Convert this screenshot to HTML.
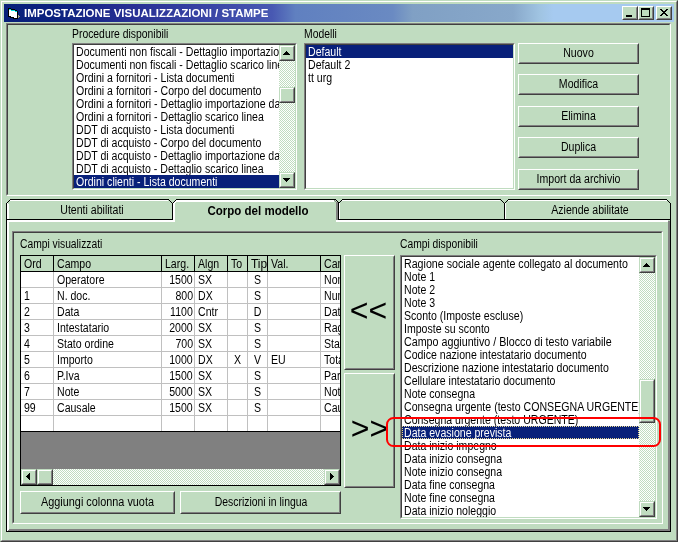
<!DOCTYPE html>
<html lang="it"><head><meta charset="utf-8"><title>IMPOSTAZIONE VISUALIZZAZIONI / STAMPE</title>
<style>
html,body{margin:0;padding:0}
body{width:678px;height:542px;overflow:hidden;position:relative;background:#c0dcc0;font:12px/13px "Liberation Sans",sans-serif;color:#000}
div,span,svg{position:absolute;box-sizing:border-box}
.t{white-space:pre;transform:scaleX(0.88);transform-origin:0 50%;left:0;top:0;line-height:13px;height:13px}
.tc{white-space:pre;transform:scaleX(0.88);transform-origin:50% 50%;left:0;right:0;text-align:center;line-height:13px;height:13px}
.tr{white-space:pre;transform:scaleX(0.88);transform-origin:100% 50%;right:0;top:0;line-height:13px;height:13px}
.sunk{border:1px solid;border-color:#808080 #fff #fff #808080}
.sunk>.i{left:0;top:0;right:0;bottom:0;border:1px solid;border-color:#404040 #c0dcc0 #c0dcc0 #404040}
.btn{border:1px solid;border-color:#fff #404040 #404040 #fff;background:#c0dcc0}
.btn>.i{left:0;top:0;right:0;bottom:0;border:1px solid;border-color:#c0dcc0 #808080 #808080 #c0dcc0}
.sb{border:1px solid;border-color:#c0dcc0 #404040 #404040 #c0dcc0;background:#c0dcc0}
.sb>.i{left:0;top:0;right:0;bottom:0;border:1px solid;border-color:#fff #808080 #808080 #fff}
.trk{background-color:#c0dcc0;background-image:repeating-conic-gradient(#fff 0% 25%,#c0dcc0 0% 50%);background-size:2px 2px}
.lb{background:#fff;overflow:hidden}
.row{left:0;height:13px;overflow:visible}
.sel{background:#08207a;color:#fff}
.gl{background:#c0c0c0}
.bl{background:#000}
</style></head>
<body>
<div id="win" style="left:0;top:0;width:678px;height:542px;will-change:transform">
<div class="" style="left:0px;top:0px;width:678px;height:542px;border:1px solid;border-color:#c0dcc0 #404040 #404040 #c0dcc0"></div>
<div class="" style="left:1px;top:1px;width:676px;height:540px;border:1px solid;border-color:#fff #808080 #808080 #fff"></div>
<div class="" style="left:4px;top:4px;width:670px;height:18px;background:linear-gradient(to right,#08207a 0%,#0c2280 8%,#283094 19%,#3c48a8 32%,#4858b2 40%,#6080c0 43.5%,#6a8ac2 58%,#80a0c4 61%,#88a8ca 76%,#a0c4e2 80%,#a6caf0 82%,#a6caf0 100%)"></div>
<svg style="left:0;top:0" width="24" height="24" viewBox="0 0 24 24" shape-rendering="crispEdges"><rect x="8" y="8" width="3" height="1" fill="#000"/><rect x="8" y="9" width="1" height="1" fill="#000"/><rect x="9" y="9" width="2" height="1" fill="#00e0e0"/><rect x="11" y="9" width="4" height="1" fill="#000"/><rect x="8" y="10" width="1" height="1" fill="#000"/><rect x="9" y="10" width="2" height="1" fill="#fff"/><rect x="11" y="10" width="4" height="1" fill="#00e0e0"/><rect x="15" y="10" width="2" height="1" fill="#000"/><rect x="8" y="11" width="1" height="1" fill="#000"/><rect x="9" y="11" width="6" height="1" fill="#fff"/><rect x="15" y="11" width="2" height="1" fill="#00e0e0"/><rect x="17" y="11" width="1" height="1" fill="#000"/><rect x="8" y="12" width="1" height="1" fill="#000"/><rect x="9" y="12" width="8" height="1" fill="#fff"/><rect x="17" y="12" width="1" height="1" fill="#000"/><rect x="8" y="13" width="1" height="1" fill="#000"/><rect x="9" y="13" width="8" height="1" fill="#fff"/><rect x="17" y="13" width="1" height="1" fill="#000"/><rect x="8" y="14" width="1" height="1" fill="#000"/><rect x="9" y="14" width="8" height="1" fill="#fff"/><rect x="17" y="14" width="1" height="1" fill="#000"/><rect x="8" y="15" width="1" height="1" fill="#000"/><rect x="9" y="15" width="8" height="1" fill="#fff"/><rect x="17" y="15" width="1" height="1" fill="#000"/><rect x="18" y="15" width="1" height="1" fill="#a0a088"/><rect x="8" y="16" width="3" height="1" fill="#000"/><rect x="11" y="16" width="6" height="1" fill="#fff"/><rect x="17" y="16" width="1" height="1" fill="#000"/><rect x="18" y="16" width="2" height="1" fill="#a0a088"/><rect x="10" y="17" width="4" height="1" fill="#000"/><rect x="14" y="17" width="3" height="1" fill="#fff"/><rect x="17" y="17" width="1" height="1" fill="#000"/><rect x="18" y="17" width="1" height="1" fill="#a0a088"/><rect x="13" y="18" width="5" height="1" fill="#000"/></svg>
<span style="left:24px;top:6px;font:bold 11px/14px 'Liberation Sans',sans-serif;color:#fff;white-space:pre;transform:scaleX(1.043);transform-origin:0 50%">IMPOSTAZIONE VISUALIZZAZIONI / STAMPE</span>
<div class="btn" style="left:622px;top:6px;width:16px;height:14px;"><div class="i"></div><div style="left:3px;top:8px;width:6px;height:2px;background:#000"></div></div>
<div class="btn" style="left:638px;top:6px;width:16px;height:14px;"><div class="i"></div><div style="left:2px;top:1px;width:9px;height:9px;border:1px solid #000;border-top-width:2px"></div></div>
<div class="btn" style="left:656px;top:6px;width:16px;height:14px;"><div class="i"></div><svg style="left:3px;top:2px" width="8" height="7" viewBox="0 0 8 7" shape-rendering="crispEdges"><path d="M0 0h2v1h1v1h2v-1h1v-1h2v1h-1v1h-1v1h-1v1h1v1h1v1h1v1h-2v-1h-1v-1h-2v1h-1v1h-2v-1h1v-1h1v-1h1v-1h-1v-1h-1v-1h-1z" fill="#000"/></svg></div>
<div class="sunk" style="left:6px;top:23px;width:665px;height:173px;"><div class="i"></div></div>
<span class="t" style="left:72px;top:28px;transform:scaleX(.865)">Procedure disponibili</span>
<span class="t" style="left:304px;top:28px;transform:scaleX(.865)">Modelli</span>
<div class="sunk" style="left:72px;top:43px;width:225px;height:147px"><div class="i"></div><div class="lb" style="left:1px;top:1px;width:205px;height:143px"><div class="row" style="top:0px;width:205px"><span class="t" style="left:2.3px;top:1px;">Documenti non fiscali - Dettaglio importazione dati</span></div><div class="row" style="top:13px;width:205px"><span class="t" style="left:2.3px;top:1px;">Documenti non fiscali - Dettaglio scarico linea</span></div><div class="row" style="top:26px;width:205px"><span class="t" style="left:2.3px;top:1px;">Ordini a fornitori - Lista documenti</span></div><div class="row" style="top:39px;width:205px"><span class="t" style="left:2.3px;top:1px;">Ordini a fornitori - Corpo del documento</span></div><div class="row" style="top:52px;width:205px"><span class="t" style="left:2.3px;top:1px;">Ordini a fornitori - Dettaglio importazione dati</span></div><div class="row" style="top:65px;width:205px"><span class="t" style="left:2.3px;top:1px;">Ordini a fornitori - Dettaglio scarico linea</span></div><div class="row" style="top:78px;width:205px"><span class="t" style="left:2.3px;top:1px;">DDT di acquisto - Lista documenti</span></div><div class="row" style="top:91px;width:205px"><span class="t" style="left:2.3px;top:1px;">DDT di acquisto - Corpo del documento</span></div><div class="row" style="top:104px;width:205px"><span class="t" style="left:2.3px;top:1px;">DDT di acquisto - Dettaglio importazione dati</span></div><div class="row" style="top:117px;width:205px"><span class="t" style="left:2.3px;top:1px;">DDT di acquisto - Dettaglio scarico linea</span></div><div class="row sel" style="top:130px;width:205px"><span class="t" style="left:2.3px;top:1px;">Ordini clienti - Lista documenti</span></div></div><div class="trk" style="left:206px;top:1px;width:16px;height:143px"><div class="sb" style="left:0px;top:0px;width:16px;height:16px;"><div class="i"></div><svg width="16" height="16" style="left:-1px;top:-1px" viewBox="0 0 16 16" shape-rendering="crispEdges" fill="#000"><rect x="7" y="6" width="1" height="1"/><rect x="6" y="7" width="3" height="1"/><rect x="5" y="8" width="5" height="1"/><rect x="4" y="9" width="7" height="1"/></svg></div><div class="sb" style="left:0px;top:127px;width:16px;height:16px;"><div class="i"></div><svg width="16" height="16" style="left:-1px;top:-1px" viewBox="0 0 16 16" shape-rendering="crispEdges" fill="#000"><rect x="4" y="6" width="7" height="1"/><rect x="5" y="7" width="5" height="1"/><rect x="6" y="8" width="3" height="1"/><rect x="7" y="9" width="1" height="1"/></svg></div><div class="sb" style="left:0px;top:42px;width:16px;height:16px;"><div class="i"></div></div></div></div>
<div class="sunk" style="left:304px;top:43px;width:211px;height:147px"><div class="i"></div><div class="lb" style="left:1px;top:1px;width:207px;height:143px"><div class="row sel" style="top:0px;width:207px"><span class="t" style="left:2.3px;top:1px;">Default</span></div><div class="row" style="top:13px;width:207px"><span class="t" style="left:2.3px;top:1px;">Default 2</span></div><div class="row" style="top:26px;width:207px"><span class="t" style="left:2.3px;top:1px;">tt urg</span></div></div></div>
<div class="btn" style="left:518px;top:43px;width:121px;height:21px;"><div class="i"></div><span class="tc" style="top:3px">Nuovo</span></div>
<div class="btn" style="left:518px;top:74px;width:121px;height:21px;"><div class="i"></div><span class="tc" style="top:3px">Modifica</span></div>
<div class="btn" style="left:518px;top:106px;width:121px;height:21px;"><div class="i"></div><span class="tc" style="top:3px">Elimina</span></div>
<div class="btn" style="left:518px;top:137px;width:121px;height:21px;"><div class="i"></div><span class="tc" style="top:3px">Duplica</span></div>
<div class="btn" style="left:518px;top:169px;width:121px;height:21px;"><div class="i"></div><span class="tc" style="top:3px">Import da archivio</span></div>
<svg style="left:0;top:0" width="678" height="542" viewBox="0 0 678 542" shape-rendering="crispEdges" fill="none"><rect x="6" y="204" width="1" height="328" fill="#000"/><rect x="7" y="204" width="2" height="325" fill="#fff"/><rect x="7" y="529" width="1" height="1" fill="#fff"/><rect x="8" y="529" width="1" height="1" fill="#fff"/><rect x="7" y="530" width="1" height="1" fill="#fff"/><rect x="6" y="531" width="665" height="1" fill="#000"/><rect x="9" y="529" width="661" height="2" fill="#808080"/><rect x="8" y="530" width="1" height="1" fill="#808080"/><rect x="670" y="204" width="1" height="328" fill="#000"/><rect x="668" y="221" width="2" height="310" fill="#808080"/><rect x="7" y="202" width="1" height="1" fill="#000"/><rect x="8" y="201" width="1" height="1" fill="#000"/><rect x="9" y="200" width="1" height="1" fill="#000"/><rect x="10" y="199" width="1" height="1" fill="#000"/><rect x="6" y="203" width="1" height="1" fill="#000"/><rect x="10" y="199" width="158" height="1" fill="#000"/><rect x="10" y="200" width="158" height="1" fill="#fff"/><rect x="7" y="203" width="1" height="16" fill="#fff"/><rect x="168" y="199" width="1" height="1" fill="#000"/><rect x="169" y="200" width="1" height="1" fill="#000"/><rect x="170" y="201" width="1" height="1" fill="#000"/><rect x="171" y="202" width="1" height="1" fill="#000"/><rect x="172" y="203" width="1" height="17" fill="#000"/><rect x="7" y="219" width="165" height="1" fill="#000"/><rect x="7" y="220" width="168" height="2" fill="#fff"/><rect x="173" y="202" width="1" height="1" fill="#000"/><rect x="174" y="201" width="1" height="1" fill="#000"/><rect x="175" y="200" width="1" height="1" fill="#000"/><rect x="176" y="199" width="1" height="1" fill="#000"/><rect x="176" y="199" width="159" height="1" fill="#000"/><rect x="176" y="200" width="158" height="2" fill="#fff"/><rect x="173" y="203" width="2" height="19" fill="#fff"/><rect x="174" y="202" width="1" height="1" fill="#fff"/><rect x="175" y="201" width="1" height="1" fill="#fff"/><rect x="175" y="202" width="1" height="1" fill="#fff"/><rect x="335" y="199" width="1" height="1" fill="#000"/><rect x="336" y="200" width="1" height="1" fill="#000"/><rect x="337" y="201" width="1" height="1" fill="#000"/><rect x="338" y="202" width="1" height="1" fill="#000"/><rect x="334" y="200" width="1" height="1" fill="#808080"/><rect x="335" y="201" width="1" height="1" fill="#808080"/><rect x="336" y="202" width="1" height="1" fill="#808080"/><rect x="336" y="202" width="2" height="19" fill="#808080"/><rect x="338" y="203" width="1" height="17" fill="#000"/><rect x="339" y="202" width="1" height="1" fill="#000"/><rect x="340" y="201" width="1" height="1" fill="#000"/><rect x="341" y="200" width="1" height="1" fill="#000"/><rect x="342" y="199" width="1" height="1" fill="#000"/><rect x="342" y="199" width="158" height="1" fill="#000"/><rect x="342" y="200" width="158" height="1" fill="#fff"/><rect x="339" y="203" width="1" height="16" fill="#fff"/><rect x="500" y="199" width="1" height="1" fill="#000"/><rect x="501" y="200" width="1" height="1" fill="#000"/><rect x="502" y="201" width="1" height="1" fill="#000"/><rect x="503" y="202" width="1" height="1" fill="#000"/><rect x="504" y="203" width="1" height="17" fill="#000"/><rect x="338" y="219" width="167" height="1" fill="#000"/><rect x="336" y="220" width="169" height="2" fill="#fff"/><rect x="505" y="202" width="1" height="1" fill="#000"/><rect x="506" y="201" width="1" height="1" fill="#000"/><rect x="507" y="200" width="1" height="1" fill="#000"/><rect x="508" y="199" width="1" height="1" fill="#000"/><rect x="508" y="199" width="159" height="1" fill="#000"/><rect x="508" y="200" width="159" height="1" fill="#fff"/><rect x="505" y="203" width="1" height="16" fill="#fff"/><rect x="667" y="200" width="1" height="1" fill="#000"/><rect x="668" y="201" width="1" height="1" fill="#000"/><rect x="669" y="202" width="1" height="1" fill="#000"/><rect x="670" y="203" width="1" height="1" fill="#000"/><rect x="504" y="219" width="167" height="1" fill="#000"/><rect x="504" y="220" width="164" height="2" fill="#fff"/></svg>
<span class="tc" style="left:6px;top:204px;left:9px;right:auto;width:166px">Utenti abilitati</span>
<span class="tc" style="left:175px;right:auto;width:166px;top:205px;font-weight:bold;transform:scaleX(.96)">Corpo del modello</span>
<span class="tc" style="left:504px;top:204px;left:507px;right:auto;width:166px">Aziende abilitate</span>
<div class="sunk" style="left:12px;top:231px;width:651px;height:293px;"><div class="i"></div></div>
<span class="t" style="left:20px;top:238px;transform:scaleX(.857)">Campi visualizzati</span>
<span class="t" style="left:400px;top:238px;transform:scaleX(.857)">Campi disponibili</span>
<div style="left:20px;top:255px;width:321px;height:231px;border:1px solid #000;background:#808080;overflow:hidden"><div style="left:0;top:0;width:319px;height:15px;background:#c0dcc0"></div><div class="bl" style="left:0;top:15px;width:319px;height:1px"></div><div style="left:0;top:16px;width:319px;height:159px;background:#fff"></div><div class="bl" style="left:32px;top:0;width:1px;height:15px"></div><div class="gl" style="left:32px;top:16px;width:1px;height:159px"></div><div class="bl" style="left:140px;top:0;width:1px;height:15px"></div><div class="gl" style="left:140px;top:16px;width:1px;height:159px"></div><div class="bl" style="left:173px;top:0;width:1px;height:15px"></div><div class="gl" style="left:173px;top:16px;width:1px;height:159px"></div><div class="bl" style="left:206px;top:0;width:1px;height:15px"></div><div class="gl" style="left:206px;top:16px;width:1px;height:159px"></div><div class="bl" style="left:226px;top:0;width:1px;height:15px"></div><div class="gl" style="left:226px;top:16px;width:1px;height:159px"></div><div class="bl" style="left:246px;top:0;width:1px;height:15px"></div><div class="gl" style="left:246px;top:16px;width:1px;height:159px"></div><div class="bl" style="left:299px;top:0;width:1px;height:15px"></div><div class="gl" style="left:299px;top:16px;width:1px;height:159px"></div><div class="gl" style="left:0;top:31px;width:319px;height:1px"></div><div class="gl" style="left:0;top:47px;width:319px;height:1px"></div><div class="gl" style="left:0;top:63px;width:319px;height:1px"></div><div class="gl" style="left:0;top:79px;width:319px;height:1px"></div><div class="gl" style="left:0;top:95px;width:319px;height:1px"></div><div class="gl" style="left:0;top:111px;width:319px;height:1px"></div><div class="gl" style="left:0;top:127px;width:319px;height:1px"></div><div class="gl" style="left:0;top:143px;width:319px;height:1px"></div><div class="gl" style="left:0;top:159px;width:319px;height:1px"></div><div class="bl" style="left:0;top:175px;width:319px;height:1px"></div><div style="left:0px;top:0px;width:32px;height:15px;overflow:hidden"><span class="t" style="left:3px;top:2px;">Ord</span></div><div style="left:33px;top:0px;width:107px;height:15px;overflow:hidden"><span class="t" style="left:3px;top:2px;">Campo</span></div><div style="left:141px;top:0px;width:32px;height:15px;overflow:hidden"><span class="t" style="left:3px;top:2px;">Larg.</span></div><div style="left:174px;top:0px;width:32px;height:15px;overflow:hidden"><span class="t" style="left:3px;top:2px;">Algn</span></div><div style="left:207px;top:0px;width:19px;height:15px;overflow:hidden"><span class="t" style="left:3px;top:2px;">To</span></div><div style="left:227px;top:0px;width:19px;height:15px;overflow:hidden"><span class="t" style="left:3px;top:2px;transform:scaleX(.99)">Tipo</span></div><div style="left:247px;top:0px;width:52px;height:15px;overflow:hidden"><span class="t" style="left:3px;top:2px;">Val.</span></div><div style="left:300px;top:0px;width:40px;height:15px;overflow:hidden"><span class="t" style="left:3px;top:2px;">Campo db</span></div><div style="left:33px;top:16px;width:107px;height:15px;overflow:hidden"><span class="t" style="left:3px;top:2px;">Operatore</span></div><div style="left:141px;top:16px;width:32px;height:15px;overflow:hidden"><span class="tr" style="right:1px;top:2px">1500</span></div><div style="left:174px;top:16px;width:32px;height:15px;overflow:hidden"><span class="t" style="left:3px;top:2px;">SX</span></div><div style="left:227px;top:16px;width:19px;height:15px;overflow:hidden"><span class="tc" style="top:2px">S</span></div><div style="left:300px;top:16px;width:40px;height:15px;overflow:hidden"><span class="t" style="left:3px;top:2px;">Nome operatore</span></div><div style="left:0px;top:32px;width:32px;height:15px;overflow:hidden"><span class="t" style="left:3px;top:2px;">1</span></div><div style="left:33px;top:32px;width:107px;height:15px;overflow:hidden"><span class="t" style="left:3px;top:2px;">N. doc.</span></div><div style="left:141px;top:32px;width:32px;height:15px;overflow:hidden"><span class="tr" style="right:1px;top:2px">800</span></div><div style="left:174px;top:32px;width:32px;height:15px;overflow:hidden"><span class="t" style="left:3px;top:2px;">DX</span></div><div style="left:227px;top:32px;width:19px;height:15px;overflow:hidden"><span class="tc" style="top:2px">S</span></div><div style="left:300px;top:32px;width:40px;height:15px;overflow:hidden"><span class="t" style="left:3px;top:2px;">Numero documento</span></div><div style="left:0px;top:48px;width:32px;height:15px;overflow:hidden"><span class="t" style="left:3px;top:2px;">2</span></div><div style="left:33px;top:48px;width:107px;height:15px;overflow:hidden"><span class="t" style="left:3px;top:2px;">Data</span></div><div style="left:141px;top:48px;width:32px;height:15px;overflow:hidden"><span class="tr" style="right:1px;top:2px">1100</span></div><div style="left:174px;top:48px;width:32px;height:15px;overflow:hidden"><span class="t" style="left:3px;top:2px;">Cntr</span></div><div style="left:227px;top:48px;width:19px;height:15px;overflow:hidden"><span class="tc" style="top:2px">D</span></div><div style="left:300px;top:48px;width:40px;height:15px;overflow:hidden"><span class="t" style="left:3px;top:2px;">Data documento</span></div><div style="left:0px;top:64px;width:32px;height:15px;overflow:hidden"><span class="t" style="left:3px;top:2px;">3</span></div><div style="left:33px;top:64px;width:107px;height:15px;overflow:hidden"><span class="t" style="left:3px;top:2px;">Intestatario</span></div><div style="left:141px;top:64px;width:32px;height:15px;overflow:hidden"><span class="tr" style="right:1px;top:2px">2000</span></div><div style="left:174px;top:64px;width:32px;height:15px;overflow:hidden"><span class="t" style="left:3px;top:2px;">SX</span></div><div style="left:227px;top:64px;width:19px;height:15px;overflow:hidden"><span class="tc" style="top:2px">S</span></div><div style="left:300px;top:64px;width:40px;height:15px;overflow:hidden"><span class="t" style="left:3px;top:2px;">Ragione sociale</span></div><div style="left:0px;top:80px;width:32px;height:15px;overflow:hidden"><span class="t" style="left:3px;top:2px;">4</span></div><div style="left:33px;top:80px;width:107px;height:15px;overflow:hidden"><span class="t" style="left:3px;top:2px;">Stato ordine</span></div><div style="left:141px;top:80px;width:32px;height:15px;overflow:hidden"><span class="tr" style="right:1px;top:2px">700</span></div><div style="left:174px;top:80px;width:32px;height:15px;overflow:hidden"><span class="t" style="left:3px;top:2px;">SX</span></div><div style="left:227px;top:80px;width:19px;height:15px;overflow:hidden"><span class="tc" style="top:2px">S</span></div><div style="left:300px;top:80px;width:40px;height:15px;overflow:hidden"><span class="t" style="left:3px;top:2px;">Stato ordine</span></div><div style="left:0px;top:96px;width:32px;height:15px;overflow:hidden"><span class="t" style="left:3px;top:2px;">5</span></div><div style="left:33px;top:96px;width:107px;height:15px;overflow:hidden"><span class="t" style="left:3px;top:2px;">Importo</span></div><div style="left:141px;top:96px;width:32px;height:15px;overflow:hidden"><span class="tr" style="right:1px;top:2px">1000</span></div><div style="left:174px;top:96px;width:32px;height:15px;overflow:hidden"><span class="t" style="left:3px;top:2px;">DX</span></div><div style="left:207px;top:96px;width:19px;height:15px;overflow:hidden"><span class="tc" style="top:2px">X</span></div><div style="left:227px;top:96px;width:19px;height:15px;overflow:hidden"><span class="tc" style="top:2px">V</span></div><div style="left:247px;top:96px;width:52px;height:15px;overflow:hidden"><span class="t" style="left:3px;top:2px;">EU</span></div><div style="left:300px;top:96px;width:40px;height:15px;overflow:hidden"><span class="t" style="left:3px;top:2px;">Totale documento</span></div><div style="left:0px;top:112px;width:32px;height:15px;overflow:hidden"><span class="t" style="left:3px;top:2px;">6</span></div><div style="left:33px;top:112px;width:107px;height:15px;overflow:hidden"><span class="t" style="left:3px;top:2px;">P.Iva</span></div><div style="left:141px;top:112px;width:32px;height:15px;overflow:hidden"><span class="tr" style="right:1px;top:2px">1500</span></div><div style="left:174px;top:112px;width:32px;height:15px;overflow:hidden"><span class="t" style="left:3px;top:2px;">SX</span></div><div style="left:227px;top:112px;width:19px;height:15px;overflow:hidden"><span class="tc" style="top:2px">S</span></div><div style="left:300px;top:112px;width:40px;height:15px;overflow:hidden"><span class="t" style="left:3px;top:2px;">Partita iva</span></div><div style="left:0px;top:128px;width:32px;height:15px;overflow:hidden"><span class="t" style="left:3px;top:2px;">7</span></div><div style="left:33px;top:128px;width:107px;height:15px;overflow:hidden"><span class="t" style="left:3px;top:2px;">Note</span></div><div style="left:141px;top:128px;width:32px;height:15px;overflow:hidden"><span class="tr" style="right:1px;top:2px">5000</span></div><div style="left:174px;top:128px;width:32px;height:15px;overflow:hidden"><span class="t" style="left:3px;top:2px;">SX</span></div><div style="left:227px;top:128px;width:19px;height:15px;overflow:hidden"><span class="tc" style="top:2px">S</span></div><div style="left:300px;top:128px;width:40px;height:15px;overflow:hidden"><span class="t" style="left:3px;top:2px;">Note</span></div><div style="left:0px;top:144px;width:32px;height:15px;overflow:hidden"><span class="t" style="left:3px;top:2px;">99</span></div><div style="left:33px;top:144px;width:107px;height:15px;overflow:hidden"><span class="t" style="left:3px;top:2px;">Causale</span></div><div style="left:141px;top:144px;width:32px;height:15px;overflow:hidden"><span class="tr" style="right:1px;top:2px">1500</span></div><div style="left:174px;top:144px;width:32px;height:15px;overflow:hidden"><span class="t" style="left:3px;top:2px;">SX</span></div><div style="left:227px;top:144px;width:19px;height:15px;overflow:hidden"><span class="tc" style="top:2px">S</span></div><div style="left:300px;top:144px;width:40px;height:15px;overflow:hidden"><span class="t" style="left:3px;top:2px;">Causale</span></div><div class="trk" style="left:0;top:213px;width:319px;height:16px"><div class="sb" style="left:0px;top:0px;width:16px;height:16px;"><div class="i"></div><svg width="16" height="16" style="left:-1px;top:-1px" viewBox="0 0 16 16" shape-rendering="crispEdges" fill="#000"><rect x="5" y="7" width="1" height="1"/><rect x="6" y="6" width="1" height="3"/><rect x="7" y="5" width="1" height="5"/><rect x="8" y="4" width="1" height="7"/></svg></div><div class="sb" style="left:16px;top:0px;width:16px;height:16px;"><div class="i"></div></div><div class="sb" style="left:303px;top:0px;width:16px;height:16px;"><div class="i"></div><svg width="16" height="16" style="left:-1px;top:-1px" viewBox="0 0 16 16" shape-rendering="crispEdges" fill="#000"><rect x="6" y="4" width="1" height="7"/><rect x="7" y="5" width="1" height="5"/><rect x="8" y="6" width="1" height="3"/><rect x="9" y="7" width="1" height="1"/></svg></div></div></div>
<div class="btn" style="left:344px;top:255px;width:51px;height:115px;"><div class="i"></div><span style="left:-2px;right:0;top:36px;text-align:center;font-size:32px;line-height:36px">&lt;&lt;</span></div>
<div class="btn" style="left:344px;top:373px;width:51px;height:115px;"><div class="i"></div><span style="left:0;right:0;top:36px;text-align:center;font-size:32px;line-height:36px">&gt;&gt;</span></div>
<div class="btn" style="left:20px;top:491px;width:155px;height:23px;"><div class="i"></div><span class="tc" style="top:4px;transform:scaleX(0.905)">Aggiungi colonna vuota</span></div>
<div class="btn" style="left:180px;top:491px;width:161px;height:23px;"><div class="i"></div><span class="tc" style="top:4px;transform:scaleX(0.868);left:1px">Descrizioni in lingua</span></div>
<div class="sunk" style="left:400px;top:255px;width:257px;height:264px"><div class="i"></div><div class="lb" style="left:1px;top:1px;width:237px;height:260px"><div class="row" style="top:0px;width:237px"><span class="t" style="left:2.3px;top:1px;transform:scaleX(0.888)">Ragione sociale agente collegato al documento</span></div><div class="row" style="top:13px;width:237px"><span class="t" style="left:2.3px;top:1px;">Note 1</span></div><div class="row" style="top:26px;width:237px"><span class="t" style="left:2.3px;top:1px;">Note 2</span></div><div class="row" style="top:39px;width:237px"><span class="t" style="left:2.3px;top:1px;">Note 3</span></div><div class="row" style="top:52px;width:237px"><span class="t" style="left:2.3px;top:1px;">Sconto (Imposte escluse)</span></div><div class="row" style="top:65px;width:237px"><span class="t" style="left:2.3px;top:1px;">Imposte su sconto</span></div><div class="row" style="top:78px;width:237px"><span class="t" style="left:2.3px;top:1px;transform:scaleX(0.892)">Campo aggiuntivo / Blocco di testo variabile</span></div><div class="row" style="top:91px;width:237px"><span class="t" style="left:2.3px;top:1px;">Codice nazione intestatario documento</span></div><div class="row" style="top:104px;width:237px"><span class="t" style="left:2.3px;top:1px;">Descrizione nazione intestatario documento</span></div><div class="row" style="top:117px;width:237px"><span class="t" style="left:2.3px;top:1px;">Cellulare intestatario documento</span></div><div class="row" style="top:130px;width:237px"><span class="t" style="left:2.3px;top:1px;">Note consegna</span></div><div class="row" style="top:143px;width:237px"><span class="t" style="left:2.3px;top:1px;transform:scaleX(0.883)">Consegna urgente (testo CONSEGNA URGENTE)</span></div><div class="row" style="top:156px;width:237px"><span class="t" style="left:2.3px;top:1px;">Consegna urgente (testo URGENTE)</span></div><div class="row sel" style="top:169px;width:237px"><div style="left:0;top:0;right:0;bottom:0;border:1px dotted #e8d890"></div><span class="t" style="left:2.3px;top:1px;">Data evasione prevista</span></div><div class="row" style="top:182px;width:237px"><span class="t" style="left:2.3px;top:1px;">Data inizio impegno</span></div><div class="row" style="top:195px;width:237px"><span class="t" style="left:2.3px;top:1px;">Data inizio consegna</span></div><div class="row" style="top:208px;width:237px"><span class="t" style="left:2.3px;top:1px;">Note inizio consegna</span></div><div class="row" style="top:221px;width:237px"><span class="t" style="left:2.3px;top:1px;">Data fine consegna</span></div><div class="row" style="top:234px;width:237px"><span class="t" style="left:2.3px;top:1px;">Note fine consegna</span></div><div class="row" style="top:247px;width:237px"><span class="t" style="left:2.3px;top:1px;">Data inizio noleggio</span></div></div><div class="trk" style="left:238px;top:1px;width:16px;height:260px"><div class="sb" style="left:0px;top:0px;width:16px;height:16px;"><div class="i"></div><svg width="16" height="16" style="left:-1px;top:-1px" viewBox="0 0 16 16" shape-rendering="crispEdges" fill="#000"><rect x="7" y="6" width="1" height="1"/><rect x="6" y="7" width="3" height="1"/><rect x="5" y="8" width="5" height="1"/><rect x="4" y="9" width="7" height="1"/></svg></div><div class="sb" style="left:0px;top:244px;width:16px;height:16px;"><div class="i"></div><svg width="16" height="16" style="left:-1px;top:-1px" viewBox="0 0 16 16" shape-rendering="crispEdges" fill="#000"><rect x="4" y="6" width="7" height="1"/><rect x="5" y="7" width="5" height="1"/><rect x="6" y="8" width="3" height="1"/><rect x="7" y="9" width="1" height="1"/></svg></div><div class="sb" style="left:0px;top:122px;width:16px;height:44px;"><div class="i"></div></div></div></div>
<div class="" style="left:386.4px;top:417px;width:274.8px;height:30.4px;border:2.6px solid #f00;border-radius:7.5px"></div>
</div>
</body></html>
